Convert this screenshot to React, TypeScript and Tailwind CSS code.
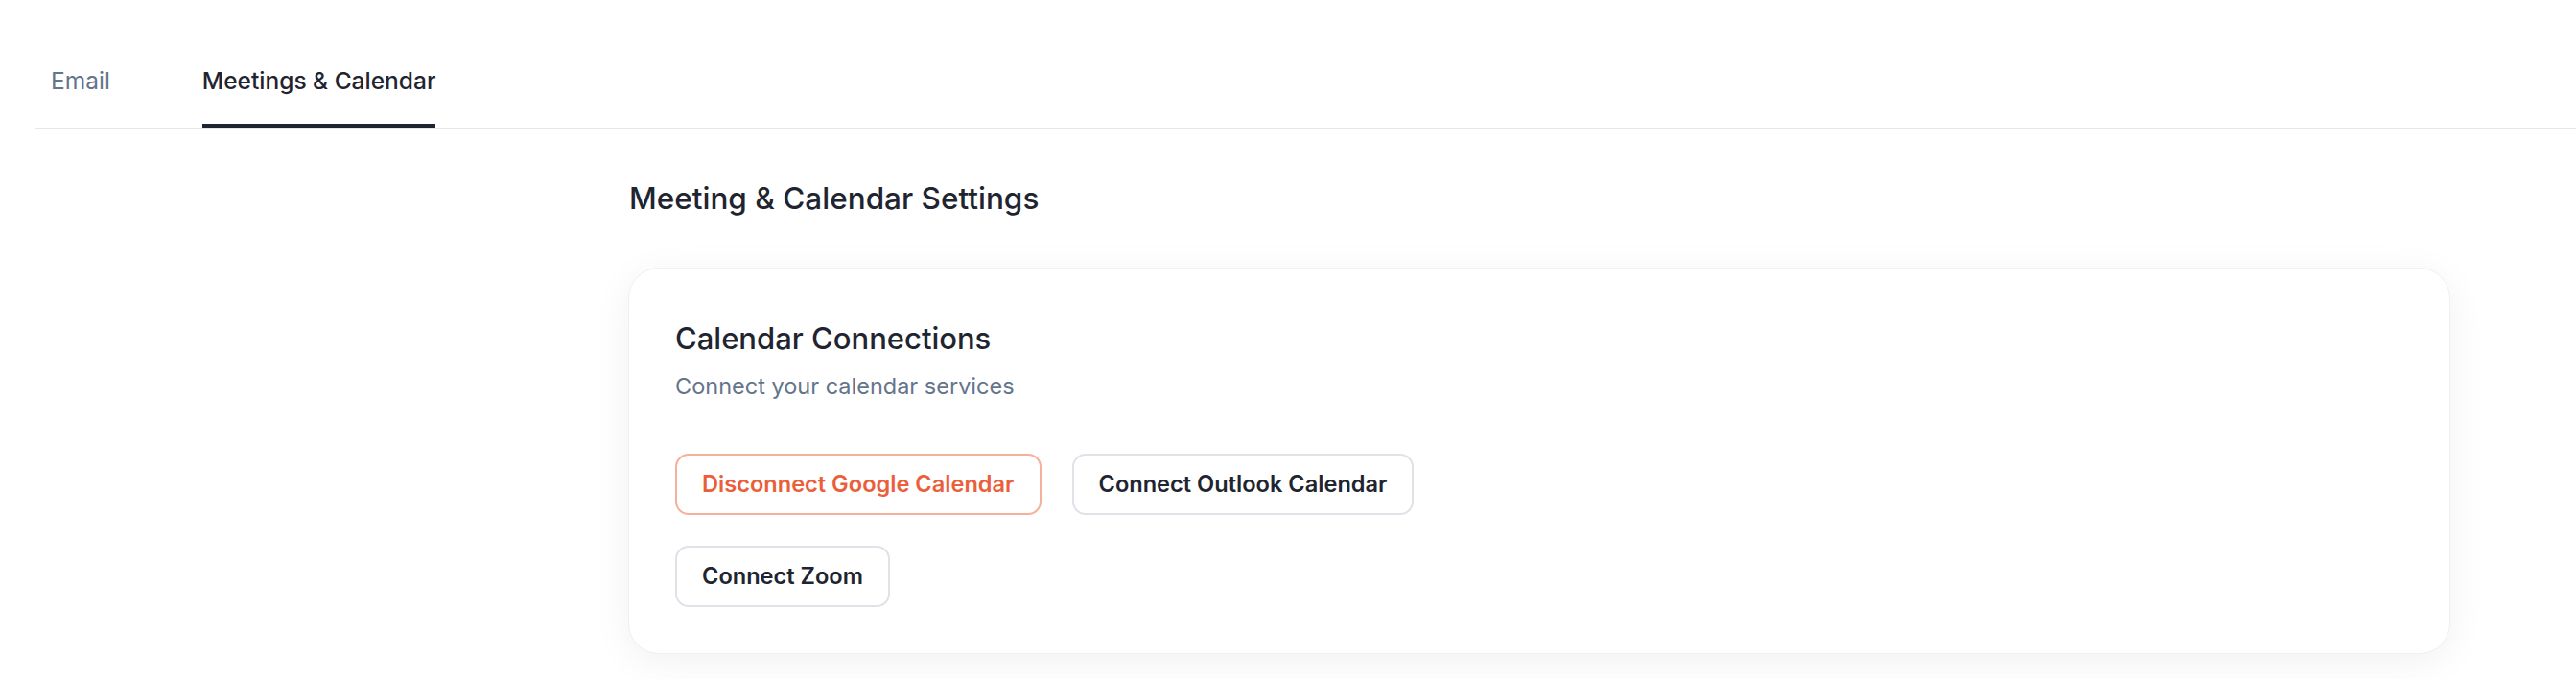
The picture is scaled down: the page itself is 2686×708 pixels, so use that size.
import React from 'react';

type Tab = { id: string; label: string };

const tabs: Tab[] = [
  { id: 'email', label: 'Email' },
  { id: 'meetings', label: 'Meetings & Calendar' },
];

const App: React.FC = () => {
  const active = 'meetings';

  return (
    <div className="min-h-screen w-full bg-white font-[family-name:Inter,sans-serif] text-[#1f2530]">
      {/* Tabs */}
      <div className="ml-9 pt-[68px] border-b-2 border-[#e5e7eb]">
        <nav className="flex gap-24 px-[17px]">
          {tabs.map((tab) => {
            const isActive = tab.id === active;
            return (
              <button
                key={tab.id}
                className={
                  isActive
                    ? 'pb-[29px] border-b-4 border-[#1f2530] text-[24.5px] leading-8 font-medium text-[#1f2530]'
                    : 'pb-[29px] border-b-4 border-transparent text-[24.5px] leading-8 text-[#64748b]'
                }
              >
                {tab.label}
              </button>
            );
          })}
        </nav>
      </div>

      {/* Content */}
      <div className="ml-[655px] mr-[131px] pt-[52px]">
        <h2 className="pl-px text-[31.5px] leading-10 font-medium">Meeting &amp; Calendar Settings</h2>

        <div className="mt-[52px] rounded-[32px] border border-[#eef0f3] bg-white px-12 pt-[53px] pb-12 shadow-[0_8px_40px_rgba(15,23,42,0.06)]">
          <h3 className="text-[31px] leading-10 font-medium">Calendar Connections</h3>
          <p className="mt-[14px] text-[23.5px] leading-8 text-[#64748b]">Connect your calendar services</p>

          <div className="mt-[54px] flex max-w-[820px] flex-wrap gap-8">
            <button className="rounded-[14px] border-2 border-[#f5b09c] bg-white px-[26px] py-[14px] text-[23.6px] leading-8 font-semibold text-[#eb5e3a]">
              Disconnect Google Calendar
            </button>
            <button className="rounded-[14px] border-2 border-[#dfe2e7] bg-white px-[26px] py-[14px] text-[23.6px] leading-8 font-semibold text-[#1f2530]">
              Connect Outlook Calendar
            </button>
            <button className="rounded-[14px] border-2 border-[#dfe2e7] bg-white px-[26px] py-[14px] text-[23.6px] leading-8 font-semibold text-[#1f2530]">
              Connect Zoom
            </button>
          </div>
        </div>
      </div>
    </div>
  );
};

export default App;
